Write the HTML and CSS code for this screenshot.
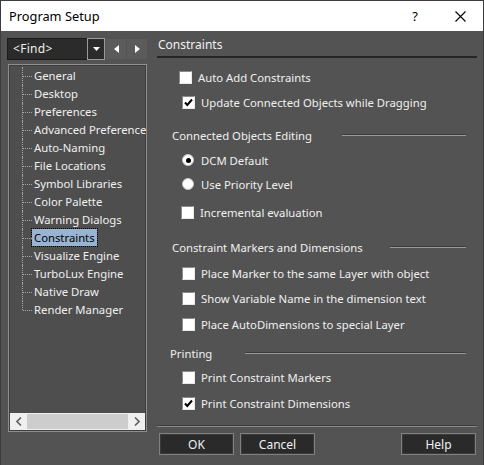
FILE: index.html
```html
<!DOCTYPE html>
<html lang="en">

<head>
    <meta charset="UTF-8">
    <title>Program Setup</title>
    <link rel="stylesheet" href="styles.css">
</head>

<body>
    <div class="window">
        <div class="titlebar">
            <span class="title">Program Setup</span>
            <span class="help-q">?</span>
            <svg class="close-x" width="11" height="11" viewBox="0 0 11 11">
                <path d="M0.5 0.5L10.5 10.5M10.5 0.5L0.5 10.5" stroke="#000" stroke-width="1.1" fill="none" />
            </svg>
        </div>

        <div class="main">
            <div class="sidebar">
                <div class="find-row">
                    <div class="combo">
                        <span class="combo-text">&lt;Find&gt;</span>
                        <span class="combo-btn">
                            <svg width="7" height="4" viewBox="0 0 7 4"><path d="M0 0H7L3.5 4Z" fill="#fff" /></svg>
                        </span>
                    </div>
                    <span class="nav-btn">
                        <svg width="5" height="8" viewBox="0 0 5 8"><path d="M5 0V8L0 4Z" fill="#fff" /></svg>
                    </span>
                    <span class="nav-btn">
                        <svg width="5" height="8" viewBox="0 0 5 8"><path d="M0 0V8L5 4Z" fill="#fff" /></svg>
                    </span>
                </div>

                <div class="tree">
                    <ul class="tree-list">
                        <li>General</li>
                        <li>Desktop</li>
                        <li>Preferences</li>
                        <li>Advanced Preferences</li>
                        <li>Auto-Naming</li>
                        <li>File Locations</li>
                        <li>Symbol Libraries</li>
                        <li>Color Palette</li>
                        <li>Warning Dialogs</li>
                        <li><span class="selected">Constraints</span></li>
                        <li>Visualize Engine</li>
                        <li>TurboLux Engine</li>
                        <li>Native Draw</li>
                        <li>Render Manager</li>
                    </ul>
                    <div class="hscroll">
                        <span class="scroll-arrow">
                            <svg width="6" height="9" viewBox="0 0 6 9"><path d="M5 0.5L1 4.5L5 8.5" stroke="#606060" stroke-width="1.6" fill="none" /></svg>
                        </span>
                        <span class="scroll-thumb"></span>
                        <span class="scroll-arrow">
                            <svg width="6" height="9" viewBox="0 0 6 9"><path d="M1 0.5L5 4.5L1 8.5" stroke="#606060" stroke-width="1.6" fill="none" /></svg>
                        </span>
                    </div>
                </div>
            </div>

            <div class="content">
                <div class="page-title">Constraints</div>

                <div class="opt opt-first ind-a">
                    <span class="check"></span>
                    <span>Auto Add Constraints</span>
                </div>
                <div class="opt gap-9">
                    <span class="check checked"><svg width="11" height="11" viewBox="0 0 11 11"><path d="M2 5.5L4.3 8L9 2.5" stroke="#000" stroke-width="2" fill="none" /></svg></span>
                    <span>Update Connected Objects while Dragging</span>
                </div>

                <div class="group gap-17">
                    <span>Connected Objects Editing</span>
                    <span class="group-line"></span>
                </div>
                <div class="opt gap-9">
                    <span class="radio on"></span>
                    <span>DCM Default</span>
                </div>
                <div class="opt gap-8">
                    <span class="radio"></span>
                    <span>Use Priority Level</span>
                </div>
                <div class="opt gap-12 ind-b">
                    <span class="check"></span>
                    <span>Incremental evaluation</span>
                </div>

                <div class="group gap-19">
                    <span>Constraint Markers and Dimensions</span>
                    <span class="group-line line-b"></span>
                </div>
                <div class="opt gap-10">
                    <span class="check"></span>
                    <span>Place Marker to the same Layer with object</span>
                </div>
                <div class="opt gap-9">
                    <span class="check"></span>
                    <span>Show Variable Name in the dimension text</span>
                </div>
                <div class="opt gap-10">
                    <span class="check"></span>
                    <span>Place AutoDimensions to special Layer</span>
                </div>

                <div class="group gap-13 ind-c">
                    <span>Printing</span>
                    <span class="group-line line-c"></span>
                </div>
                <div class="opt gap-8">
                    <span class="check"></span>
                    <span>Print Constraint Markers</span>
                </div>
                <div class="opt gap-10">
                    <span class="check checked"><svg width="11" height="11" viewBox="0 0 11 11"><path d="M2 5.5L4.3 8L9 2.5" stroke="#000" stroke-width="2" fill="none" /></svg></span>
                    <span>Print Constraint Dimensions</span>
                </div>

                <div class="footer">
                    <button class="btn">OK</button>
                    <button class="btn btn-cancel">Cancel</button>
                    <button class="btn btn-help">Help</button>
                </div>
            </div>
        </div>
    </div>
</body>

</html>
```

FILE: styles.css
```css
body {
    margin: 0;
    background: #535353;
    font-family: "Noto Sans", "Liberation Sans", sans-serif;
    font-size: 11.3px;
    color: #f0f0f0;
}

.window {
    width: 484px;
    height: 465px;
    box-sizing: border-box;
    border: 1px solid #3c3c3c;
    border-bottom: none;
    overflow: hidden;
    display: flex;
    flex-direction: column;
}

.titlebar {
    height: 30px;
    background: #fff;
    color: #000;
    display: flex;
    align-items: center;
    padding-left: 8px;
    font-size: 12.8px;
}

.title {
    flex: 1;
}

.help-q {
    font-size: 13px;
    margin-right: 37px;
}

.close-x {
    margin-right: 17px;
}

.main {
    flex: 1;
    display: flex;
}

/* left side */

.sidebar {
    width: 140px;
    padding: 7px 0 0 6px;
}

.find-row {
    display: flex;
    align-items: center;
    height: 22px;
}

.combo {
    width: 98px;
    height: 22px;
    box-sizing: border-box;
    display: flex;
    background: #2b2b2b;
    border: 1px solid #1a1a1a;
}

.combo-text {
    flex: 1;
    padding-left: 5px;
    line-height: 20px;
    font-size: 12px;
    letter-spacing: 0.3px;
}

.combo-btn {
    width: 16px;
    margin: -1px -1px -1px 0;
    border: 1px solid #9a9a9a;
    display: flex;
    align-items: center;
    justify-content: center;
}

.nav-btn {
    width: 20px;
    height: 20px;
    margin-left: 1px;
    background: #5b5b5b;
    display: flex;
    align-items: center;
    justify-content: center;
}

.tree {
    margin: 4px 0 0 1px;
    width: 139px;
    height: 368px;
    box-sizing: border-box;
    border: 1px solid #8e8e8e;
    box-shadow: inset 0 0 0 1px #3e3e3e;
    background: #4e4e4e;
    display: flex;
    flex-direction: column;
    overflow: hidden;
}

.tree-list {
    flex: 1;
    list-style: none;
    margin: 0;
    padding: 2px 0 0 0;
    white-space: nowrap;
}

.tree-list li {
    position: relative;
    height: 18px;
    line-height: 18px;
    padding-left: 25px;
}

.tree-list li::before {
    content: "";
    position: absolute;
    left: 13px;
    top: 0;
    height: 18px;
    border-left: 1px dotted #a8a8a8;
}

.tree-list li:last-child::before {
    height: 9px;
}

.tree-list li::after {
    content: "";
    position: absolute;
    left: 14px;
    width: 9px;
    top: 9px;
    border-top: 1px dotted #a8a8a8;
}

.selected {
    background: #99b4d1;
    color: #000;
    outline: 1px dotted #000;
    padding: 1px 2px;
    margin-left: -2px;
}

.hscroll {
    height: 17px;
    margin: 0 1px 1px 1px;
    background: #f0f0f0;
    display: flex;
    align-items: center;
}

.scroll-arrow {
    width: 17px;
    display: flex;
    justify-content: center;
}

.scroll-thumb {
    flex: 1;
    height: 15px;
    background: #cdcdcd;
}

/* right side */

.content {
    flex: 1;
    margin-left: 10px;
    margin-right: 6px;
    display: flex;
    flex-direction: column;
}

.page-title {
    margin-top: 6px;
    line-height: 16px;
    padding-left: 1px;
    font-size: 12px;
    border-bottom: 2px solid #262626;
    padding-bottom: 3px;
}

.opt {
    display: flex;
    align-items: center;
    height: 16px;
    padding-left: 25px;
}

.opt-first {
    margin-top: 11px;
}

.ind-a {
    padding-left: 22px;
}

.ind-b {
    padding-left: 24px;
}

.check {
    width: 13px;
    height: 13px;
    box-sizing: border-box;
    background: #fff;
    border: 1px solid #8a8a8a;
    border-right-color: #e8e8e8;
    border-bottom-color: #e8e8e8;
    margin-right: 6px;
    display: flex;
    align-items: center;
    justify-content: center;
}

.radio {
    width: 12px;
    height: 12px;
    box-sizing: border-box;
    border-radius: 50%;
    background: #fff;
    border: 1px solid #c8c8c8;
    margin-right: 7px;
    display: flex;
    align-items: center;
    justify-content: center;
}

.radio.on::after {
    content: "";
    width: 5px;
    height: 5px;
    border-radius: 50%;
    background: #000;
}

.group {
    display: flex;
    align-items: center;
    height: 16px;
    padding-left: 15px;
}

.ind-c {
    padding-left: 13px;
}

.group-line {
    flex: 1;
    margin: 0 11px 0 30px;
    height: 1px;
    background: #9a9a9a;
    border-top: 1px solid #3c3c3c;
}

.line-b {
    margin-left: 27px;
}

.line-c {
    margin-left: 33px;
}

.gap-8 { margin-top: 8px; }
.gap-9 { margin-top: 9px; }
.gap-10 { margin-top: 10px; }
.gap-12 { margin-top: 12px; }
.gap-13 { margin-top: 13px; }
.gap-17 { margin-top: 17px; }
.gap-19 { margin-top: 19px; }

.footer {
    margin-top: 14px;
    border-top: 1px solid #3e3e3e;
    box-shadow: inset 0 1px 0 #8a8a8a;
    padding: 7px 1px 0 2px;
    display: flex;
}

.btn {
    width: 75px;
    height: 22px;
    background: #2a2a2a;
    color: #f0f0f0;
    border: 1px solid #808080;
    box-shadow: inset 0 0 0 1px #3a3a3a;
    font-family: "Noto Sans", "Liberation Sans", sans-serif;
    font-size: 12px;
    padding: 0;
}

.btn-cancel {
    margin-left: 6px;
}

.btn-help {
    margin-left: auto;
}
```
